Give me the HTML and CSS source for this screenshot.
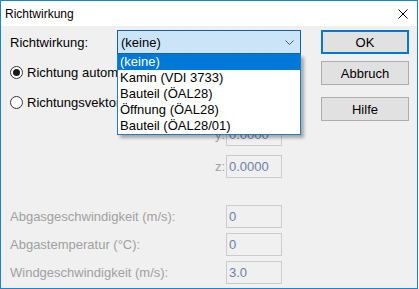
FILE: index.html
```html
<!DOCTYPE html>
<html lang="de">
<head>
    <meta charset="UTF-8">
    <title>Richtwirkung</title>
    <link rel="stylesheet" href="styles.css">
</head>
<body>

    <div class="window">
        <div class="titlebar">
            <span class="title">Richtwirkung</span>
            <svg class="close" width="10" height="10" viewBox="0 0 10 10">
                <path d="M0.5 0.5 L9.5 9.5 M9.5 0.5 L0.5 9.5" stroke="#000" stroke-width="1"/>
            </svg>
        </div>

        <div class="content">
            <div class="form">
                <div class="row-top">
                    <span class="label">Richtwirkung:</span>
                    <div class="combo">
                        <span>(keine)</span>
                        <svg class="chevron" width="9" height="5" viewBox="0 0 9 5">
                            <path d="M0.5 0.5 L4.5 4.5 L8.5 0.5" fill="none" stroke="#555" stroke-width="1"/>
                        </svg>
                    </div>
                    <ul class="dropdown">
                        <li class="selected">(keine)</li>
                        <li>Kamin (VDI 3733)</li>
                        <li>Bauteil (ÖAL28)</li>
                        <li>Öffnung (ÖAL28)</li>
                        <li>Bauteil (ÖAL28/01)</li>
                    </ul>
                </div>

                <div class="radio-row first">
                    <span class="radio checked"></span>
                    <span>Richtung automatisch</span>
                </div>

                <div class="vector-row">
                    <div class="radio-row">
                        <span class="radio"></span>
                        <span>Richtungsvektor:</span>
                    </div>
                    <span class="axis">x:</span>
                    <div class="field">0.0000</div>
                </div>
                <div class="vector-row">
                    <span class="spacer"></span>
                    <span class="axis">y:</span>
                    <div class="field">0.0000</div>
                </div>
                <div class="vector-row">
                    <span class="spacer"></span>
                    <span class="axis">z:</span>
                    <div class="field">0.0000</div>
                </div>

                <div class="param-row gap">
                    <span class="param-label">Abgasgeschwindigkeit (m/s):</span>
                    <div class="field">0</div>
                </div>
                <div class="param-row">
                    <span class="param-label">Abgastemperatur (°C):</span>
                    <div class="field">0</div>
                </div>
                <div class="param-row">
                    <span class="param-label">Windgeschwindigkeit (m/s):</span>
                    <div class="field">3.0</div>
                </div>
            </div>

            <div class="buttons">
                <button class="btn default">OK</button>
                <button class="btn">Abbruch</button>
                <button class="btn help">Hilfe</button>
            </div>
        </div>
    </div>

</body>
</html>
```

FILE: styles.css
```css
body {
    margin: 0;
    background: #ffffff;
    font-family: "Liberation Sans", Arial, sans-serif;
    font-size: 13px;
    color: #000;
}

.window {
    width: 418px;
    height: 289px;
    box-sizing: border-box;
    border: 1px solid #1883d7;
    background: #f0f0f0;
    display: flex;
    flex-direction: column;
}

.titlebar {
    height: 25px;
    background: #ffffff;
    display: flex;
    align-items: center;
    justify-content: space-between;
    padding: 0 9px 0 4px;
}

.title {
    font-size: 12px;
    margin-top: 1px;
}

.close {
    display: block;
}

.content {
    display: flex;
    padding: 4px 0 0 9px;
}

.form {
    width: 291px;
    position: relative;
}

.row-top {
    display: flex;
    align-items: center;
    height: 24px;
}

.label {
    width: 107px;
}

.combo {
    width: 184px;
    height: 24px;
    box-sizing: border-box;
    border: 1px solid #0a64b0;
    background: #cce4f7;
    display: flex;
    align-items: center;
    justify-content: space-between;
    padding: 0 6px 0 3px;
}

.chevron {
    display: block;
}

.dropdown {
    position: absolute;
    top: 24px;
    left: 107px;
    width: 184px;
    box-sizing: border-box;
    margin: 0;
    padding: 0;
    list-style: none;
    background: #ffffff;
    border: 1px solid #1b7fd0;
    border-top: none;
    box-shadow: 3px 3px 3px rgba(0, 0, 0, 0.3);
    z-index: 5;
}

.dropdown li {
    height: 16px;
    line-height: 16px;
    padding-left: 2px;
    white-space: nowrap;
}

.dropdown li.selected {
    background: #0078d7;
    color: #ffffff;
}

.radio-row {
    display: flex;
    align-items: center;
    height: 20px;
    white-space: nowrap;
}

.radio-row.first {
    margin-top: 8px;
}

.radio {
    width: 13px;
    height: 13px;
    box-sizing: border-box;
    border: 1px solid #333;
    border-radius: 50%;
    background: #fff;
    margin-right: 4px;
    display: flex;
    align-items: center;
    justify-content: center;
}

.radio.checked::after {
    content: "";
    width: 7px;
    height: 7px;
    border-radius: 50%;
    background: #1a1a1a;
}

.vector-row {
    display: flex;
    align-items: center;
    height: 23px;
    margin-top: 9px;
}

.vector-row:first-of-type {
    margin-top: 8px;
}

.vector-row .radio-row,
.spacer {
    width: 205px;
}

.axis {
    width: 11px;
    color: #a0a0a0;
}

.field {
    width: 56px;
    height: 23px;
    box-sizing: border-box;
    border: 1px solid #cccccc;
    background: #f0f0f0;
    color: #6f80a6;
    padding-left: 2px;
    line-height: 21px;
}

.param-row {
    display: flex;
    align-items: center;
    height: 23px;
    margin-top: 5px;
}

.param-row.gap {
    margin-top: 27px;
}

.param-label {
    width: 216px;
    color: #a0a0a0;
}

.buttons {
    display: flex;
    flex-direction: column;
    margin-left: 20px;
}

.btn {
    width: 88px;
    height: 24px;
    box-sizing: border-box;
    border: 1px solid #adadad;
    background: #e1e1e1;
    font-family: "Liberation Sans", Arial, sans-serif;
    font-size: 13px;
    color: #000;
    padding: 0;
    margin-bottom: 7px;
}

.btn.default {
    border: 2px solid #0078d7;
}

.btn.help {
    margin-top: 5px;
}
```
